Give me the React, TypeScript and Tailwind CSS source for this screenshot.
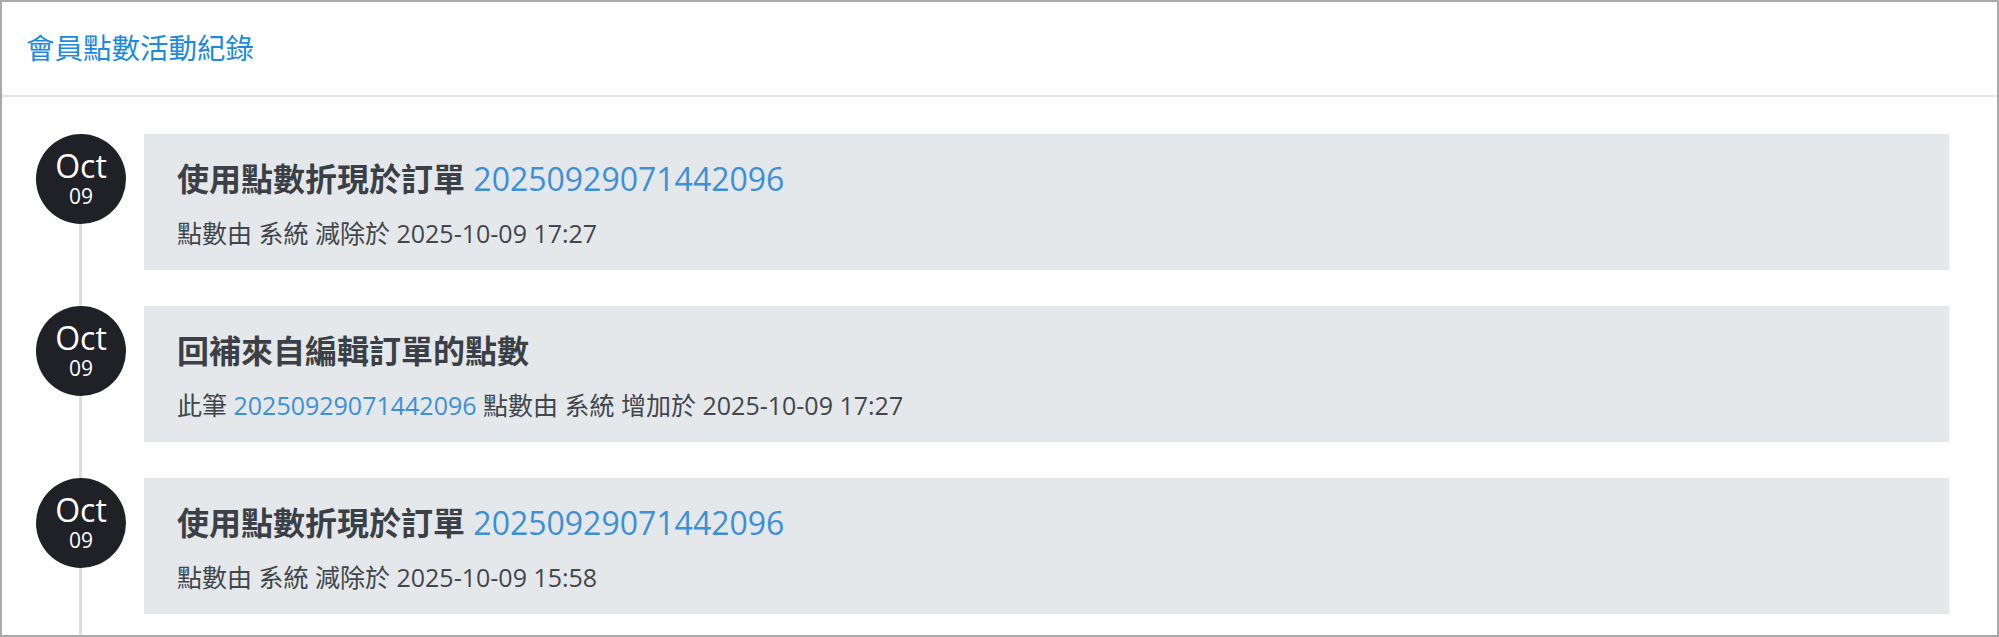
import React from "react";

type Entry = {
  month: string;
  day: string;
  title: string;
  titleOrder?: string;
  prefix?: string;
  subOrder?: string;
  detail: string;
};

const entries: Entry[] = [
  {
    month: "Oct",
    day: "09",
    title: "使用點數折現於訂單",
    titleOrder: "20250929071442096",
    detail: "點數由 系統 減除於 2025-10-09 17:27",
  },
  {
    month: "Oct",
    day: "09",
    title: "回補來自編輯訂單的點數",
    prefix: "此筆",
    subOrder: "20250929071442096",
    detail: "點數由 系統 增加於 2025-10-09 17:27",
  },
  {
    month: "Oct",
    day: "09",
    title: "使用點數折現於訂單",
    titleOrder: "20250929071442096",
    detail: "點數由 系統 減除於 2025-10-09 15:58",
  },
];

export default function App() {
  return (
    <div
      className="h-[637px] overflow-hidden border-2 border-[#a9a9a9] bg-white"
      style={{ fontFamily: '"Open Sans", "Noto Sans CJK TC", sans-serif' }}
    >
      {/* 標題列 */}
      <div className="flex h-[95px] items-center border-b-2 border-[#e3e3e3] px-[24px]">
        <h2 className="text-[28.5px] leading-none text-[#1b8ae0]">會員點數活動紀錄</h2>
      </div>

      {/* 時間軸 */}
      <div className="relative pt-[37px] pl-[34px] pr-[48px]">
        <div
          className="absolute left-[77px] top-[82px] bottom-[-200px] w-[3px] bg-[#dedede]"
          aria-hidden="true"
        />
        <div className="flex flex-col gap-[36px]">
          {entries.map((e, i) => (
            <div key={i} className="flex items-start gap-[18px]">
              <div className="relative z-10 flex h-[90px] w-[90px] shrink-0 flex-col items-center justify-center rounded-full bg-[#1f2126] text-white">
                <span className="text-[32px] leading-[34px]">{e.month}</span>
                <span className="text-[21px] leading-[26px]">{e.day}</span>
              </div>
              <div className="h-[136px] flex-1 bg-[#e4e8eb] pl-[33px] pr-6 pt-[21px]">
                <div className="text-[32px] font-semibold leading-[48px] text-[#3b4046]">
                  {e.title}
                  {e.titleOrder && (
                    <>
                      {" "}
                      <span className="font-normal text-[#3d8fd6]">{e.titleOrder}</span>
                    </>
                  )}
                </div>
                <div className="mt-[12px] text-[25px] leading-[36px] text-[#41464b]">
                  {e.prefix && (
                    <>
                      {e.prefix}{" "}
                      <span className="text-[#3d8fd6]">{e.subOrder}</span>{" "}
                    </>
                  )}
                  {e.detail}
                </div>
              </div>
            </div>
          ))}
        </div>
      </div>
    </div>
  );
}
